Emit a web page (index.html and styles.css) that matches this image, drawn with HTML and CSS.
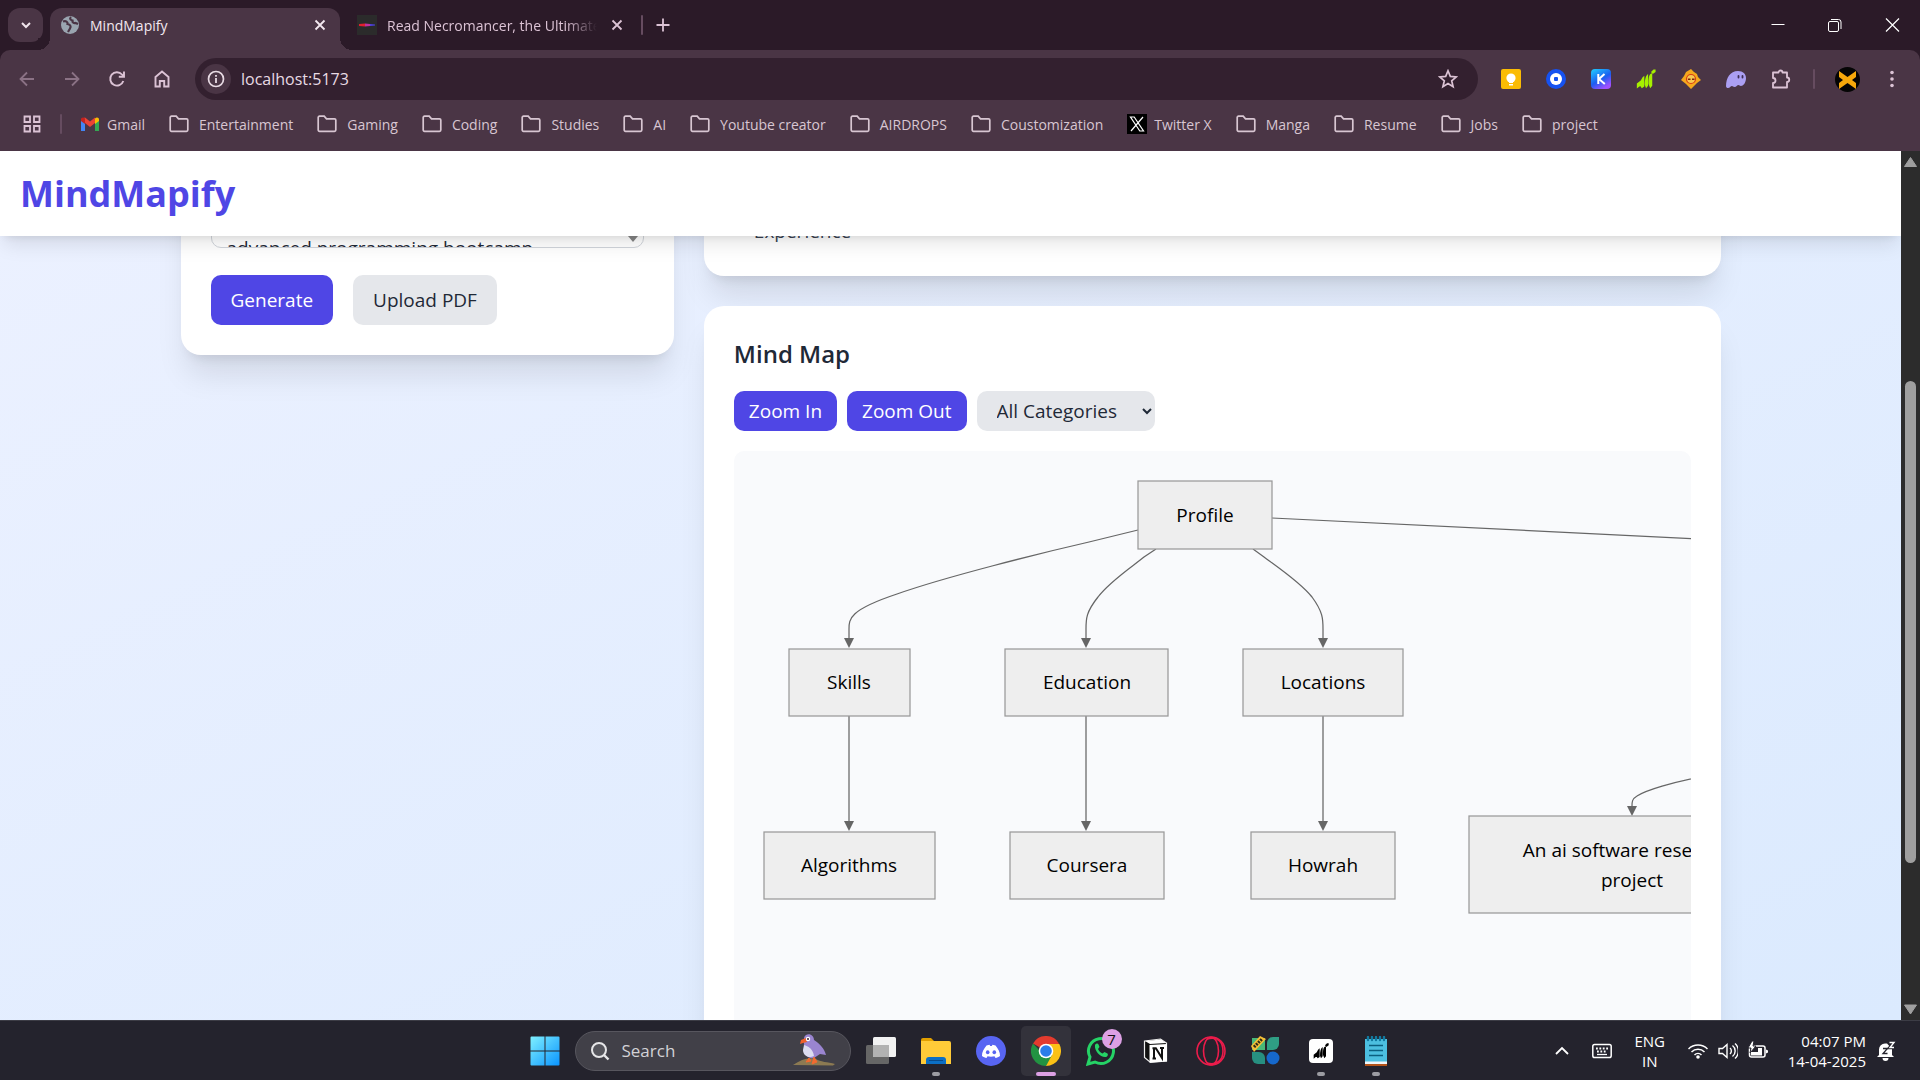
FILE: index.html
```html
<!DOCTYPE html>
<html lang="en">
<head>
<meta charset="utf-8">
<title>MindMapify</title>
<link rel="stylesheet" href="styles.css">
</head>
<body>
<svg class="defs" aria-hidden="true">
  <symbol id="folder" viewBox="0 0 20 20"><path d="M1.2 3.5a1.3 1.3 0 0 1 1.3-1.3h4.700l2.300 2.600h8a1.300 1.300 0 0 1 1.300 1.300v9.900a1.300 1.300 0 0 1-1.300 1.300h-15a1.300 1.300 0 0 1-1.300-1.300z" fill="none" stroke="currentColor" stroke-width="1.700"/></symbol>
  <symbol id="close" viewBox="0 0 20 20"><path d="M5.500 5.500l9 9M14.500 5.500l-9 9" stroke="currentColor" stroke-width="1.800" fill="none"/></symbol>
  <symbol id="bars" viewBox="0 0 24 24"><path d="M1 23.500v-6l5-4v7l-2 .5zM5 20c0-6 2-10 5-12v13l-3 2zM10.500 19c0-6 1-11 4-13v14l-2.500 3zM15 18c0-6 0-12 4-13l.5 1v14L17 23z"/><path d="M18 3.500L21 .5h2.500v3L20 6z"/></symbol>
</svg>

<header class="browser">
  <div class="tabstrip">
    <button class="tab-search" aria-label="Search tabs"><svg class="i20" viewBox="0 0 20 20"><path d="M6 8l4 4 4-4" fill="none" stroke="currentColor" stroke-width="2"/></svg></button>
    <div class="tab active">
      <svg class="i20" viewBox="0 0 20 20"><circle cx="10" cy="10" r="9" fill="#9aa5b0"/><path d="M3 6.500c3-1 5 .5 4.500 2.500 2.500.5 4 2 2.500 4.500l-2 3.500M11 2c-2 2 0 3 1.500 3.500-.5 2 1.500 3 3 2.500l2.500 1" fill="none" stroke="#4a3545" stroke-width="2.200"/></svg>
      <span class="tab-title">MindMapify</span>
      <button class="tab-close" aria-label="Close tab"><svg class="i20"><use href="#close"/></svg></button>
    </div>
    <div class="tab idle">
      <svg class="i20" viewBox="0 0 20 20"><path fill="#2b2b2b" d="M0 0h20v20H0z"/><path d="M2 9l6-.5v3L2 11z" fill="#e02030"/><path d="M8 8.500l5 .5v2l-5 .5z" fill="#c030a0"/><path d="M13 9l5 .500v1l-5 .5z" fill="#5040e0"/></svg>
      <span class="tab-title faded">Read Necromancer, the Ultimate</span>
      <button class="tab-close" aria-label="Close tab"><svg class="i20"><use href="#close"/></svg></button>
    </div>
    <span class="vbar"></span>
    <button class="new-tab" aria-label="New tab"><svg class="i20" viewBox="0 0 20 20"><path d="M10 3.500v13M3.500 10h13" stroke="currentColor" stroke-width="1.800"/></svg></button>
    <div class="window-controls">
      <button aria-label="Minimise"><svg class="i20" viewBox="0 0 20 20"><path d="M3.500 9.500h13" stroke="#fff"/></svg></button>
      <button aria-label="Restore"><svg class="i20" viewBox="0 0 20 20"><rect x="3.500" y="6.500" width="10" height="10" rx="1.500" fill="none" stroke="#fff"/><path d="M6 4.500h7.500a2.500 2.500 0 0 1 2.500 2.500v7" fill="none" stroke="#fff"/></svg></button>
      <button aria-label="Close"><svg class="i20" viewBox="0 0 20 20"><path d="M4 3.500l13 13M17 3.500l-13 13" stroke="#fff" stroke-width="1.200"/></svg></button>
    </div>
  </div>

  <div class="toolbar">
    <nav class="nav">
      <button class="dim" aria-label="Back"><svg class="i20" viewBox="0 0 20 20"><path d="M17 10H4M10 3.500L3.500 10l6.500 6.500" fill="none" stroke="currentColor" stroke-width="1.800"/></svg></button>
      <button class="dim" aria-label="Forward"><svg class="i20" viewBox="0 0 20 20"><path d="M3 10h13M10 3.500l6.500 6.500-6.500 6.500" fill="none" stroke="currentColor" stroke-width="1.800"/></svg></button>
      <button aria-label="Reload"><svg class="i20" viewBox="0 0 20 20"><path d="M16.300 12A6.700 6.700 0 1 1 15 5.500l1.500 1.700M17 2.500v5.200h-5.200" fill="none" stroke="currentColor" stroke-width="1.900"/></svg></button>
      <button aria-label="Home"><svg class="i20" viewBox="0 0 20 20"><path d="M3.500 8L10 2.500 16.500 8v9.500h-4.300V12H7.800v5.500H3.500z" fill="none" stroke="currentColor" stroke-width="1.900"/></svg></button>
    </nav>
    <div class="omnibox">
      <button class="site-info" aria-label="Site information"><svg class="i20" viewBox="0 0 20 20"><circle cx="10" cy="10" r="7.500" fill="none" stroke="#e8dbe4" stroke-width="1.700"/><path d="M10 9v5M10 6v1.800" stroke="#e8dbe4" stroke-width="1.800"/></svg></button>
      <input type="text" value="localhost:5173" aria-label="Address">
      <button class="star" aria-label="Bookmark this page"><svg class="i20" viewBox="0 0 20 20"><path d="M10 1.800l2.300 5.600 6 .5-4.600 3.900 1.400 5.900L10 14.600l-5.100 3.100 1.400-5.900L1.700 7.900l6-.5z" fill="none" stroke="currentColor" stroke-width="1.700"/></svg></button>
    </div>
    <div class="extensions">
      <button aria-label="Keep"><svg class="i20" viewBox="0 0 20 20"><rect width="20" height="20" rx="2" fill="#fbbc04"/><circle cx="10" cy="9" r="4.600" fill="#fff"/><path d="M8 13h4v1H8zM8 15h4v1.500H8z" fill="#fff"/></svg></button>
      <button aria-label="Wallet"><svg class="i20" viewBox="0 0 20 20"><circle cx="10" cy="10" r="10" fill="#1652f0"/><circle cx="10" cy="10" r="6" fill="#fff"/><rect x="8" y="8" width="4" height="4" rx="1" fill="#1652f0"/></svg></button>
      <button aria-label="Keplr"><svg class="i20" viewBox="0 0 20 20"><defs><linearGradient id="kg" x1="0" y1="0" x2=".6" y2="1"><stop offset="0" stop-color="#1fd1ff"/><stop offset=".6" stop-color="#1b5ef0"/><stop offset="1" stop-color="#a050ff"/></linearGradient></defs><rect width="20" height="20" rx="4" fill="url(#kg)"/><path d="M7.300 5v10M13.500 5L8 10l5.800 5" fill="none" stroke="#fff" stroke-width="2"/></svg></button>
      <button aria-label="Grass"><svg class="i20 lime"><use href="#bars"/></svg></button>
      <button aria-label="Shield"><svg class="i20" viewBox="0 0 20 20"><path d="M10 0l3 3 3 2 1 3 3 3-4 3-6 6-5-5-5-4 3-4 2-4z" fill="#f5a81c"/><circle cx="10" cy="10" r="4.500" fill="#f7c850" stroke="#d93a16" stroke-width="1.200"/><path d="M7 9.500h2.500v1.500H7zM11 9.500h2.500v1.500H11z" fill="#7a2410"/></svg></button>
      <button aria-label="Phantom"><svg class="i20" viewBox="0 0 20 20"><path d="M0 17C0 9 4 2 12 2c5 0 8 3 8 7 0 5-3 8-5 8-1.500 0-1.500-1-2.500-1-1.500 0-2 2-4 2-1.500 0-1.500-1-2.500-1-1.500 0-2 2-4 2-1 0-2-.5-2-2z" fill="#ab9ff2"/><path d="M12.500 7v1.500M16.500 7v1.500" stroke="#3f2f55" stroke-width="1.800" stroke-linecap="round"/></svg></button>
      <button aria-label="Extensions"><svg class="i20" viewBox="0 0 20 20"><path d="M2 3.500h5.500a2 2 0 0 1 4 0H16v5a2.200 2.200 0 0 1 0 4.500v5.500H2V14a2.500 2.500 0 0 0 0-5z" fill="none" stroke="currentColor" stroke-width="1.800" stroke-linejoin="round"/></svg></button>
    </div>
    <span class="vbar"></span>
    <button class="avatar" aria-label="Profile"><svg viewBox="0 0 25 25"><circle cx="12.500" cy="12.500" r="12.500" fill="#050505"/><path d="M4 4l8.500 6L21 4v6l-4 3 4 3v6l-8.500-6L4 22v-6l4-3-4-3z" fill="#f5a70b"/></svg></button>
    <button class="menu" aria-label="Menu"><svg class="i20" viewBox="0 0 20 20"><g fill="currentColor"><circle cx="10" cy="3.500" r="1.800"/><circle cx="10" cy="10" r="1.800"/><circle cx="10" cy="16.500" r="1.800"/></g></svg></button>
  </div>

  <nav class="bookmarks">
    <button class="apps" aria-label="Apps"><svg class="i20" viewBox="0 0 20 20"><path d="M2.500 2.500h5.500V8H2.500zM12 2.500h5.500V8H12zM2.500 12h5.500v5.500H2.500zM12 12h5.500v5.500H12z" fill="none" stroke="currentColor" stroke-width="1.800"/></svg></button>
    <span class="vbar"></span>
    <a href="#" class="site"><svg class="i20" viewBox="0 0 20 20"><path d="M1 5v12h4V9z" fill="#4285f4"/><path d="M19 5v12h-4V9z" fill="#34a853"/><path d="M1 5l4-1.500 5 4 5-4V9l-5 4-5-4-4-3z" fill="#ea4335"/><path d="M15 4.500c2-2 4-.5 4 1V7l-4 3z" fill="#fbbc04"/><path d="M5 4.500c-2-2-4-.5-4 1V7l4 3z" fill="#c5221f"/></svg>Gmail</a>
    <a href="#"><svg class="i20"><use href="#folder"/></svg>Entertainment</a>
    <a href="#"><svg class="i20"><use href="#folder"/></svg>Gaming</a>
    <a href="#"><svg class="i20"><use href="#folder"/></svg>Coding</a>
    <a href="#"><svg class="i20"><use href="#folder"/></svg>Studies</a>
    <a href="#"><svg class="i20"><use href="#folder"/></svg>AI</a>
    <a href="#"><svg class="i20"><use href="#folder"/></svg>Youtube creator</a>
    <a href="#"><svg class="i20"><use href="#folder"/></svg>AIRDROPS</a>
    <a href="#"><svg class="i20"><use href="#folder"/></svg>Coustomization</a>
    <a href="#" class="site"><svg class="i20" viewBox="0 0 20 20"><path d="M0 0h20v20H0z"/><path d="M3.500 3h3.700l9.300 14h-3.700zM16 3L4 17" fill="none" stroke="#fff" stroke-width="1.200"/></svg>Twitter X</a>
    <a href="#"><svg class="i20"><use href="#folder"/></svg>Manga</a>
    <a href="#"><svg class="i20"><use href="#folder"/></svg>Resume</a>
    <a href="#"><svg class="i20"><use href="#folder"/></svg>Jobs</a>
    <a href="#"><svg class="i20"><use href="#folder"/></svg>project</a>
  </nav>
</header>

<div class="viewport">
  <div class="page">
    <div class="site-header"><h1>MindMapify</h1></div>
    <main class="layout">
      <section class="card input-card">
        <div class="field">
          <textarea aria-label="Profile text">advanced programming bootcamp</textarea>
          <svg class="field-arrow" viewBox="0 0 12 10"><path d="M1 0h10v3L6 9 1 3z" fill="#858585"/></svg>
        </div>
        <div class="actions">
          <button class="btn primary">Generate</button>
          <button class="btn muted">Upload PDF</button>
        </div>
      </section>
      <div class="results">
        <section class="card summary"><p>Experience</p></section>
        <section class="card map-card">
          <h2>Mind Map</h2>
          <div class="map-tools">
            <button class="btn small primary">Zoom In</button>
            <button class="btn small primary">Zoom Out</button>
            <select aria-label="Category"><option>All Categories</option></select>
          </div>
          <div class="canvas">
            <svg class="diagram" width="1062" height="600">
              <defs><marker id="arrow" viewBox="0 0 10 10" refX="0" refY="5" markerWidth="10" markerHeight="10" markerUnits="userSpaceOnUse" orient="auto"><path d="M0 0l10 5-10 5z" fill="#666"/></marker></defs>
              <g class="edges">
                <path d="M404 79L355 91C307 102 211 126 163 143C115 159 115 168 115 178V187"/>
                <path d="M422 98L410 106C399 115 375 131 364 146C352 161 352 168 352 178V187"/>
                <path d="M519 98L530 106C542 115 566 131 578 146C589 161 589 168 589 178V187"/>
                <path class="open" d="M538 67L966 88"/>
                <path d="M966 326C940 331 912 339 903 345C898 348 898 351 898 355"/>
                <path d="M115 265V370"/><path d="M352 265V370"/><path d="M589 265V370"/>
              </g>
              <g class="nodes">
                <rect x="404" y="30" width="134" height="68"/><text x="471" y="71">Profile</text>
                <rect x="55" y="198" width="121" height="67"/><text x="115" y="238">Skills</text>
                <rect x="271" y="198" width="163" height="67"/><text x="353" y="238">Education</text>
                <rect x="509" y="198" width="160" height="67"/><text x="589" y="238">Locations</text>
                <rect x="30" y="381" width="171" height="67"/><text x="115" y="421">Algorithms</text>
                <rect x="276" y="381" width="154" height="67"/><text x="353" y="421">Coursera</text>
                <rect x="517" y="381" width="144" height="67"/><text x="589" y="421">Howrah</text>
                <rect x="735" y="365" width="326" height="97"/><text x="893" y="406">An ai software research</text><text x="898" y="436">project</text>
              </g>
            </svg>
          </div>
        </section>
      </div>
    </main>
  </div>
  <div class="scrollbar">
    <svg viewBox="0 0 19 21"><path d="M9.500 6.500l6 9h-12z" fill="#9f9f9f" stroke="#9f9f9f" stroke-linejoin="round"/></svg>
    <span class="before"></span><span class="thumb"></span><span class="after"></span>
    <svg viewBox="0 0 19 21"><path d="M9.500 15l6-9h-12z" fill="#9f9f9f" stroke="#9f9f9f" stroke-linejoin="round"/></svg>
  </div>
</div>

<footer class="taskbar">
  <div class="task-center">
    <button class="app" aria-label="Start"><svg class="i30" viewBox="0 0 30 30"><defs><linearGradient id="wg" x1="0" y1="0" x2="1" y2="1"><stop offset="0" stop-color="#7ff0ff"/><stop offset="1" stop-color="#0a94ff"/></linearGradient></defs><path d="M.5 1.500a1 1 0 0 1 1-1h13v14H.5zM15.500.5h13a1 1 0 0 1 1 1v13h-14zM.5 15.500h14v14h-13a1 1 0 0 1-1-1zM15.500 15.500h14v13a1 1 0 0 1-1 1h-13z" fill="url(#wg)"/></svg></button>
    <label class="search">
      <svg class="i20" viewBox="0 0 20 20"><circle cx="9" cy="9" r="7" fill="#55555c" stroke="#e6e6e8" stroke-width="2"/><path d="M14 14l4.500 4.500" stroke="#e6e6e8" stroke-width="2.400"/></svg>
      <input type="text" placeholder="Search" aria-label="Search">
      <svg class="bird" viewBox="0 0 44 34"><path d="M1 31c8-5 15-8 23-6 4 3 12 3 19 5l-2 1.500z" fill="#8c7a52"/><path d="M12 13c0-6-1-10 2-12 4-2 8 1 8 5 6 4 10 8 12 15l-6-1-6 4c-7 1-10-4-10-11z" fill="#9a85d0"/><path d="M12 11c4 1 9 4 10 11-6 3-11-1-11-6z" fill="#dcdcf0"/><path d="M14 4l-5 2-1 4 3-1 4-1z" fill="#f0602a"/><circle cx="16" cy="5" r="2.200" fill="#fff"/><circle cx="16" cy="5" r="1" fill="#3a2030"/><path d="M17 24l-3 4 5-1zM22 23l-2 7 5-2z" fill="#f26a30" stroke="#f26a30"/></svg>
    </label>
    <button class="app" aria-label="Task view"><svg class="i30" viewBox="0 0 30 30"><rect y="9" width="23" height="19" rx="1.500" fill="#666"/><rect x="7" y="1" width="23" height="20" rx="1.500" fill="#f2f2f2"/><path d="M7 9h16v12H8.500A1.500 1.500 0 0 1 7 19.500z" fill="#b2b2b2"/></svg></button>
    <button class="app open" aria-label="File Explorer"><svg class="i30" viewBox="0 0 30 30"><path d="M0 4a2 2 0 0 1 2-2h8l3 3v4H0z" fill="#e2a000"/><path d="M0 5h28a2 2 0 0 1 2 2v21H0z" fill="#ffcb38"/><path d="M5 28v-4a3 3 0 0 1 3-3h14a3 3 0 0 1 3 3v4z" fill="#0c6fc4"/><path d="M8 24.500h14" stroke="#084a8a"/></svg></button>
    <button class="app" aria-label="Discord"><svg class="i30" viewBox="0 0 30 30"><circle cx="15" cy="15" r="15" fill="#5865f2"/><path d="M10.500 9.500l3-.8.700 1.300h1.600l.7-1.300 3 .8c2.500 3 4.800 7 4.500 10.500-1.500 1.200-3 1.700-4.500 2l-1-1.800c-2 .6-5 .6-7 0l-1 1.800c-1.500-.3-3-.8-4.500-2-.3-3.500 2-7.500 4.500-10.500z" fill="#fff"/><ellipse cx="11.700" cy="16.200" rx="1.800" ry="2" fill="#5865f2"/><ellipse cx="18.300" cy="16.200" rx="1.800" ry="2" fill="#5865f2"/></svg></button>
    <button class="app current" aria-label="Chrome"><svg class="i30" viewBox="0 0 30 30"><path d="M15 15L2 7.500a15 15 0 0 1 26 0z" fill="#e33b2e"/><path d="M15 15h-6L2 7.500A15 15 0 0 0 15 30l7-11z" fill="#229342"/><path d="M15 8h13.300A15 15 0 0 1 15 30l6-11z" fill="#fbc116"/><circle cx="15" cy="15" r="7.300" fill="#fff"/><circle cx="15" cy="15" r="5.800" fill="#2b7de9"/></svg></button>
    <button class="app" aria-label="WhatsApp"><svg class="i30" viewBox="0 0 30 30"><path d="M2 28l2-7a12.500 12.500 0 1 1 5 5z" fill="none" stroke="#25d366" stroke-width="3"/><path d="M9 9c1-2 3-2 3.500-.5l1 2.500-1.500 2c1 2 2.500 3.500 4.500 4.500l2-1.500 3 1.500c1 1 0 3-1.500 3.500-5 1-12-6-11-12z" fill="#25d366"/></svg><span class="badge">7</span></button>
    <button class="app" aria-label="Notion"><svg class="i30" viewBox="0 0 30 30"><path d="M3.500 5l16-2 6 4v18l-16 1.500-6-5z" fill="#111" stroke="#eee" stroke-width="1.200"/><path d="M8.500 9L26 8v17.500L8.500 26.500z" fill="#fff"/><path d="M4 5l16-1.500L25 7 9 8z" fill="#fff"/><path d="M13 22.500V12.500h2l6 9.500V12M11.500 12.300h4M11.500 22.500h3.500M19 12h4" fill="none" stroke="#111" stroke-width="2"/></svg></button>
    <button class="app" aria-label="Opera"><svg class="i30" viewBox="0 0 30 30"><g fill="none" stroke="#ec1c4b" stroke-width="1.600"><circle cx="15" cy="15" r="14"/><ellipse cx="15" cy="15" rx="7.500" ry="13.800"/><path d="M11 3c12-3 16 4 16 12s-5 15-16 12"/></g></svg></button>
    <button class="app" aria-label="Beta app"><svg class="i30" viewBox="0 0 30 30"><path d="M1 2h13v12H1z" fill="#48b878"/><path d="M28 1v7a6 6 0 0 1-6 6h-6V7a6 6 0 0 1 6-6z" fill="#2f9e84"/><path d="M1 16h7a6 6 0 0 1 6 6v6H7a6 6 0 0 1-6-6z" fill="#278f80"/><circle cx="22" cy="22" r="6.500" fill="#1668cc"/><path d="M0 10L9 0l6 3L3 16z" fill="#f4bf36"/><path d="M3 11l8-8" stroke="#2e2a18" stroke-width="3" stroke-dasharray="2 1"/></svg></button>
    <button class="app open" aria-label="Grass"><svg class="i30" viewBox="0 0 30 30"><rect x="3" y="3" width="24" height="24" rx="4" fill="#fff"/><use href="#bars" x="7" y="7" width="16" height="16"/></svg></button>
    <button class="app open" aria-label="Notepad"><svg class="i30" viewBox="0 0 30 30"><path d="M4 26h22v4H4z" fill="#b4541a"/><path d="M4 3h22v24H4z" fill="#4cbfe0"/><path d="M4 25.500h22V28H4z" fill="#eef6fa"/><path d="M8 9.500h14M8 14.500h14M8 19.500h14" stroke="#0b5f80" stroke-width="1.600"/><path d="M7 1v3M11 1v3M15 1v3M19 1v3M23 1v3" stroke="#127aa0" stroke-width="2.400" stroke-linecap="round"/></svg></button>
  </div>
  <div class="tray">
    <button aria-label="Hidden icons"><svg class="i20" viewBox="0 0 20 20"><path d="M4 13l6-6 6 6" fill="none" stroke="#fff" stroke-width="1.800"/></svg></button>
    <button aria-label="Keyboard"><svg class="i20" viewBox="0 0 20 20"><rect x=".8" y="3.500" width="18.400" height="13" rx="1.800" fill="none" stroke="#fff" stroke-width="1.500"/><path d="M4 7.500h12M5 10.500h10" stroke="#fff" stroke-width="1.800" stroke-dasharray="1.800 1.600"/><path d="M5 13.500h10" stroke="#fff" stroke-width="1.300"/></svg></button>
    <span class="lang">ENG<br>IN</span>
    <button class="status" aria-label="Network, volume and battery">
      <svg class="i20" viewBox="0 0 20 20"><g fill="none" stroke="#fff" stroke-width="1.500"><path d="M.5 8a13.500 13.500 0 0 1 19 0M3.500 11a9.200 9.200 0 0 1 13 0M6.500 14a5 5 0 0 1 7 0"/></g><circle cx="10" cy="16" r="1.800" fill="#fff"/></svg>
      <svg class="i20" viewBox="0 0 20 20"><g fill="none" stroke="#fff" stroke-width="1.400"><path d="M1 7.500h3.500L9 3.500v13l-4.500-4H1zM12 7a4 4 0 0 1 0 6M14.500 4.500a7 7 0 0 1 0 11M17 2.500a10 10 0 0 1 0 15"/></g></svg>
      <svg class="i20" viewBox="0 0 20 20"><rect x="1.500" y="5" width="15.500" height="11" rx="2" fill="none" stroke="#fff" stroke-width="1.500"/><path d="M3 11h7V7h4v7.500H3zM18 8.500l2 1v2l-2 1z" fill="#fff"/><path d="M4 0L0 7h3l-1 5 6-7H5l1-5z" fill="#fff" stroke="#25242e"/></svg>
    </button>
    <time class="clock">04:07 PM<br>14-04-2025</time>
    <button aria-label="Notifications"><svg class="i20" viewBox="0 0 20 20"><path d="M3 14V8.500a6 6 0 0 1 6-6h2L16 8v6l2 2H1zM6.500 17h6a3 3 0 0 1-6 0z" fill="#fff"/><path d="M7 7.500h4.500L7 12.500h4.500" fill="none" stroke="#25242e" stroke-width="1.300"/><path d="M13.500 1.500h4.500l-4 5h4" fill="none" stroke="#25242e" stroke-width="3.500"/><path d="M13.500 1.500h4.500l-4 5h4" fill="none" stroke="#fff" stroke-width="1.400"/></svg></button>
  </div>
</footer>
</body>
</html>
```
FILE: styles.css
```css
* { box-sizing: border-box; }
body {
  margin: 0;
  height: 100vh;
  display: flex;
  flex-direction: column;
  overflow: hidden;
  font-family: "Open Sans", "Noto Sans", sans-serif;
  font-size: 19px;
}
button, input, select, textarea { font: inherit; color: inherit; }
button {
  display: flex;
  align-items: center;
  justify-content: center;
  border: 0;
  padding: 0;
  background: none;
}
input { border: 0; background: none; padding: 0; outline: 0; min-width: 0; }
svg { display: block; flex: none; }
.defs { display: none; }
.i20 { width: 20px; height: 20px; }
.i30 { width: 30px; height: 30px; }
.lime { fill: #a6f000; }

/* Browser frame */
.browser { background: #2b1a28; color: #dcc3d5; font-size: 14px; flex: none; }
.tabstrip { display: flex; align-items: center; height: 50px; padding-left: 8px; }
.tab-search { width: 35px; height: 34px; border-radius: 12px; background: #4a3545; color: #f0e4ec; }
.tab { display: flex; align-items: center; gap: 10px; }
.tab-title { flex: 1; overflow: hidden; white-space: nowrap; }
.tab-close { width: 20px; height: 20px; }
.active {
  position: relative;
  align-self: flex-end;
  width: 290px;
  height: 42px;
  margin-left: 7px;
  padding: 0 10px 8px;
  border-radius: 12px 12px 0 0;
  background: #4a3545;
  color: #f3e8f0;
}
.active::before, .active::after {
  content: "";
  position: absolute;
  bottom: 0;
  width: 12px;
  height: 12px;
}
.active::before { left: -12px; background: radial-gradient(circle at 0 0, #2b1a28 12px, #4a3545 12px); }
.active::after { right: -12px; background: radial-gradient(circle at 100% 0, #2b1a28 12px, #4a3545 12px); }
.idle { width: 270px; margin: 0 14px 0 17px; }
.faded { mask-image: linear-gradient(to right, #000 85%, transparent); }
.vbar { width: 2px; height: 20px; border-radius: 1px; background: #664c60; }
.new-tab { margin-left: 10px; }
.window-controls { display: flex; margin-left: auto; }
.window-controls button { width: 57px; height: 50px; }

.toolbar {
  display: flex;
  align-items: center;
  height: 58px;
  padding: 0 18px 0 17px;
  border-radius: 10px 10px 0 0;
  background: #4a3545;
}
.nav { display: flex; gap: 25px; margin-right: 23px; }
.dim { color: #8b7285; }
.omnibox {
  flex: 1;
  display: flex;
  align-items: center;
  height: 42px;
  padding: 0 20px 0 6px;
  border-radius: 21px;
  background: #33202f;
}
.omnibox input { flex: 1; margin-left: 10px; font-size: 16px; color: #e8dbe4; }
.site-info { width: 30px; height: 30px; border-radius: 50%; background: #4a3545; }
.extensions { display: flex; gap: 25px; margin: 0 22px 0 23px; }
.avatar { width: 25px; height: 25px; margin: 0 22px 0 20px; }
.avatar svg { width: 25px; height: 25px; }

.bookmarks {
  display: flex;
  align-items: center;
  height: 43px;
  padding: 0 22px 11px;
  background: #4a3545;
}
.bookmarks a {
  display: flex;
  align-items: center;
  gap: 10px;
  margin-right: 24px;
  color: #d8c6d2;
  text-decoration: none;
  white-space: nowrap;
}
.bookmarks .site { gap: 7px; }
.bookmarks .vbar { margin: 0 18px; }

/* Page */
.viewport { flex: 1; min-height: 0; display: flex; }
.page {
  flex: 1;
  min-width: 0;
  overflow: hidden;
  background: linear-gradient(to bottom right, #ecf1ff, #dbeafe);
  color: #1f2937;
}
.site-header {
  position: relative;
  z-index: 1;
  padding: 20px;
  background: #fff;
  box-shadow: 0 12px 19px -4px rgb(0 0 0 / .1), 0 5px 8px -5px rgb(0 0 0 / .1);
}
h1 { margin: 0; font-size: 36px; line-height: 45px; color: #4f46e5; }
.layout {
  display: grid;
  grid-template-columns: repeat(3, minmax(0, 1fr));
  align-items: start;
  gap: 30px;
  max-width: 1600px;
  margin: -75px auto 0;
  padding: 0 30px;
}
.results {
  grid-column: span 2;
  display: grid;
  grid-template-columns: minmax(0, 1fr);
  gap: 30px;
}
.card {
  padding: 30px;
  border-radius: 20px;
  background: #fff;
  box-shadow: 0 25px 31px -6px rgb(0 0 0 / .1), 0 10px 12px -8px rgb(0 0 0 / .1);
}
.field { position: relative; margin-bottom: 27px; }
textarea {
  display: block;
  width: 100%;
  height: 57px;
  padding: 41px 15px 0;
  border: 1px solid #d1d5db;
  border-radius: 10px;
  line-height: 30px;
  resize: none;
  overflow: hidden;
}
.field-arrow { position: absolute; right: 5px; bottom: 5px; width: 12px; height: 10px; }
.actions { display: flex; gap: 20px; }
.btn { height: 50px; padding: 0 20px; border-radius: 10px; }
.small { height: 40px; padding: 0 15px; }
.primary { background: #4f46e5; color: #fff; }
.muted { background: #e5e7eb; }
.summary { padding-top: 55px; }
.summary p { margin: 0; padding: 0 20px; line-height: 30px; color: #374151; }
h2 { margin: 0 0 20px; font-size: 24px; line-height: 35px; font-weight: 600; }
.map-tools { display: flex; gap: 10px; margin-bottom: 20px; }
select {
  width: 178px;
  height: 40px;
  padding: 0 0 0 16px;
  border: 0;
  border-radius: 10px;
  background: #e5e7eb;
}
.canvas { overflow: hidden; border-radius: 10px; background: #f9fafc; }
.edges path { fill: none; stroke: #666; stroke-width: 1.25px; marker-end: url(#arrow); }
.edges .open { marker-end: none; }
.nodes rect { fill: #eee; stroke: #999; stroke-width: 1.25px; }
.nodes text { fill: #000; font-size: 19px; text-anchor: middle; }

.scrollbar {
  display: flex;
  flex-direction: column;
  align-items: center;
  width: 19px;
  background: #2c2c2c;
}
.scrollbar svg { width: 19px; height: 21px; }
.before { flex: 209; }
.thumb { flex: 482; width: 11px; border-radius: 6px; background: #9f9f9f; }
.after { flex: 136; }

/* Taskbar */
.taskbar {
  flex: none;
  display: grid;
  grid-template-columns: 1fr auto 1fr;
  align-items: center;
  height: 60px;
  border-top: 1px solid #3c3c45;
  background: #24232d;
  color: #fff;
}
.task-center { grid-column: 2; display: flex; align-items: center; gap: 5px; }
.app { position: relative; width: 50px; height: 50px; border-radius: 5px; }
.current { background: #33323b; }
.open::after, .current::after {
  content: "";
  position: absolute;
  bottom: 0;
  left: 21px;
  width: 8px;
  height: 4px;
  border-radius: 2px;
  background: #9c9ca2;
}
.current::after { left: 15px; width: 20px; background: #dca0e4; }
.badge {
  position: absolute;
  top: 3px;
  right: 4px;
  width: 20px;
  height: 20px;
  border-radius: 50%;
  background: #dca0e4;
  color: #111;
  font-size: 15px;
  line-height: 20px;
}
.search {
  display: flex;
  align-items: center;
  width: 276px;
  height: 40px;
  padding: 0 14px;
  border: 1px solid #57565e;
  border-radius: 20px;
  background: #414048;
}
.search input { flex: 1; margin-left: 12px; font-size: 17px; }
.search input::placeholder { color: #d2d2d6; }
.bird { width: 44px; height: 34px; }
.tray {
  display: flex;
  align-items: center;
  justify-content: flex-end;
  padding-right: 24px;
  font-size: 15px;
  line-height: 20px;
}
.tray > * { margin-left: 20px; }
.lang { width: 36px; text-align: center; }
.status { gap: 10px; }
.tray .clock { text-align: right; }
.tray .clock + button { margin-left: 10px; }
```
